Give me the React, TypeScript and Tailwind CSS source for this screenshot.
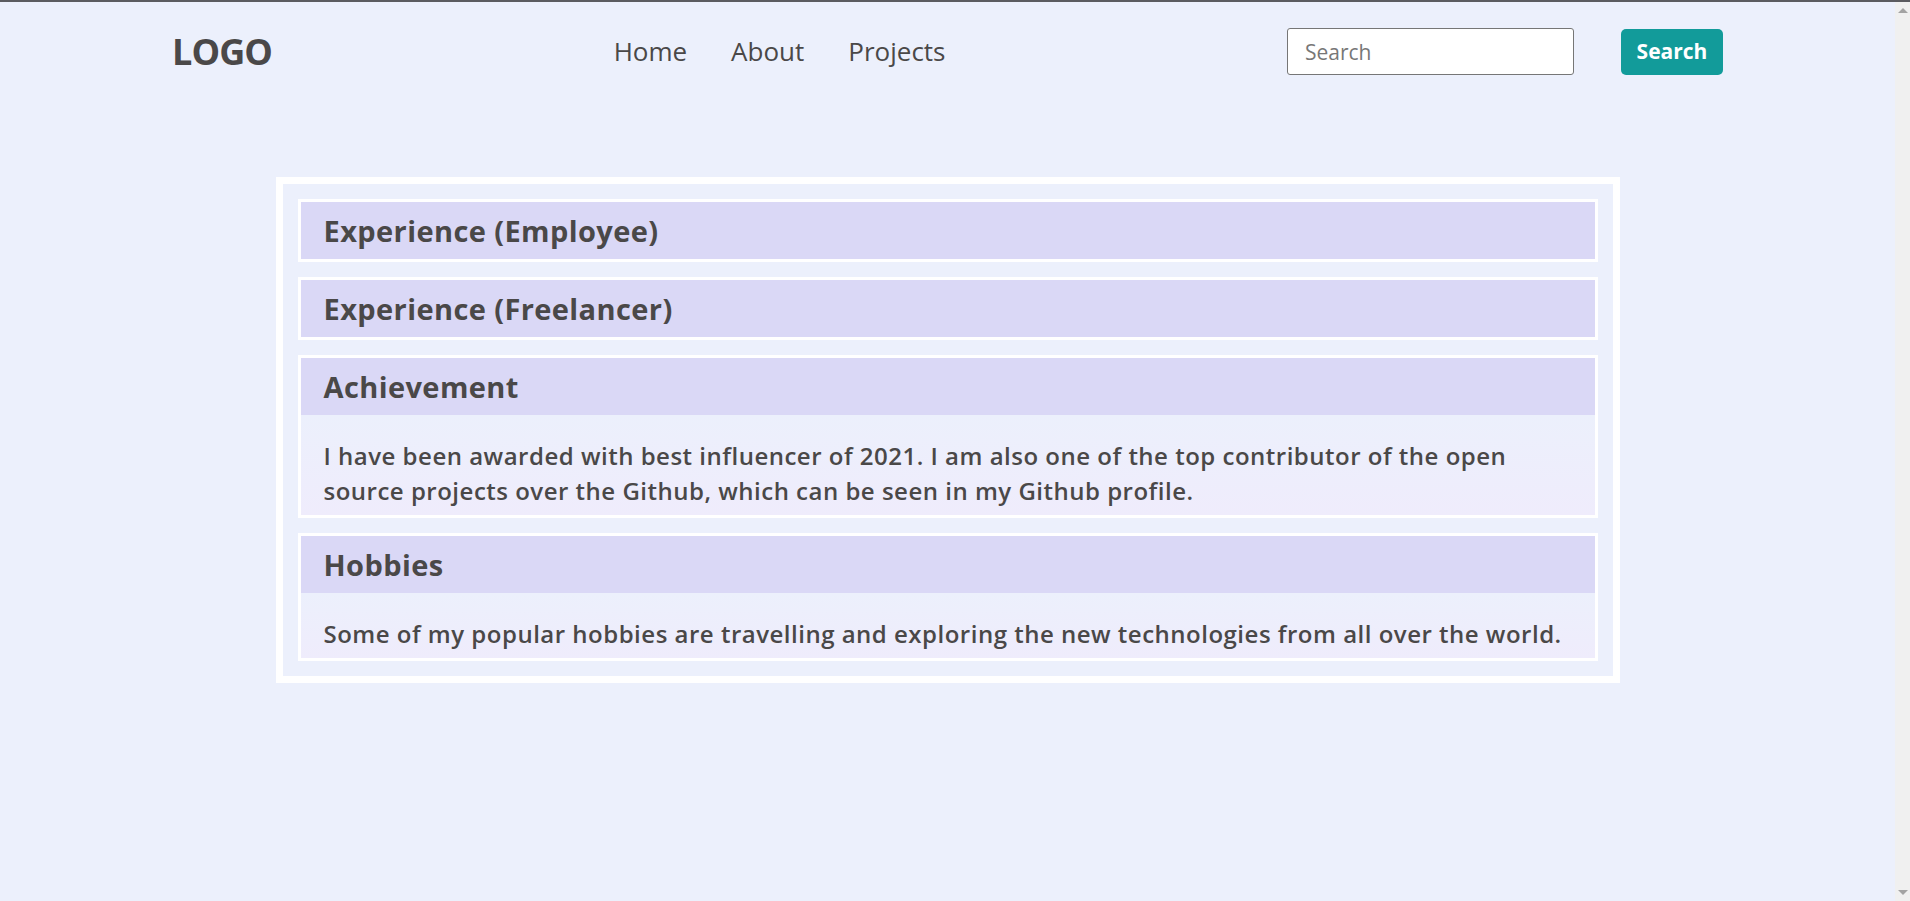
import React from 'react';

const sections = [
  { id: 'employee', title: 'Experience (Employee)' },
  { id: 'freelancer', title: 'Experience (Freelancer)' },
  {
    id: 'achievement',
    title: 'Achievement',
    body: 'I have been awarded with best influencer of 2021. I am also one of the top contributor of the open source projects over the Github, which can be seen in my Github profile.',
  },
  {
    id: 'hobbies',
    title: 'Hobbies',
    body: 'Some of my popular hobbies are travelling and exploring the new technologies from all over the world.',
  },
];

function Header() {
  return (
    <header className="flex items-center justify-between px-[172px] pt-[26px]">
      <div className="text-[36px] font-bold tracking-tight text-[#4a4848] leading-none">LOGO</div>

      <nav className="flex items-center gap-[44px] text-[26px] text-[#4a4848]">
        <a href="#">Home</a>
        <a href="#">About</a>
        <a href="#">Projects</a>
      </nav>

      <div className="flex items-center gap-[47px]">
        <input
          type="text"
          placeholder="Search"
          className="w-[287px] h-[47px] rounded-[3px] border border-[#767676] bg-white pl-[17px] text-[21px] text-[#4a4848] placeholder:text-[#777777] outline-none"
        />
        <button className="w-[102px] h-[46px] rounded-[5px] bg-[#129b9a] text-white text-[21px] font-bold">
          Search
        </button>
      </div>
    </header>
  );
}

function Scrollbar() {
  return (
    <div className="w-[15px] bg-[#f0f0f0] flex flex-col items-center justify-between py-[6px]">
      <span className="w-0 h-0 border-l-[5px] border-r-[5px] border-b-[5px] border-l-transparent border-r-transparent border-b-[#a3a3a3]" />
      <span className="w-0 h-0 border-l-[5px] border-r-[5px] border-t-[5px] border-l-transparent border-r-transparent border-t-[#a3a3a3]" />
    </div>
  );
}

export default function App() {
  return (
    <div className="h-screen flex flex-col bg-[#ecf0fc] font-['Open_Sans',sans-serif] overflow-hidden">
      <div className="h-[2px] bg-[#5b5b60]" />
      <div className="flex-1 flex">
        <main className="flex-1">
          <Header />

          {/* Sections */}
          <section className="mx-auto mt-[102px] w-[1344px] border-[7px] border-white p-[15px] flex flex-col gap-[15px]">
            {sections.map((s) => (
              <div key={s.id} className="border-[3px] border-white">
                <div className="h-[57px] flex items-center px-[23px] bg-[#dad8f6]">
                  <h2 className="text-[29px] tracking-[0.4px] font-bold text-[#4a4848] leading-none">{s.title}</h2>
                </div>
                {s.body && (
                  <div className="px-[23px] pt-[23px] pb-[7px] bg-gradient-to-b from-[#ecf0fc] to-[#efecfc]">
                    <p className="text-[24px] leading-[35px] tracking-[0.5px] font-semibold text-[#4a4848]">{s.body}</p>
                  </div>
                )}
              </div>
            ))}
          </section>
        </main>
        <Scrollbar />
      </div>
    </div>
  );
}
